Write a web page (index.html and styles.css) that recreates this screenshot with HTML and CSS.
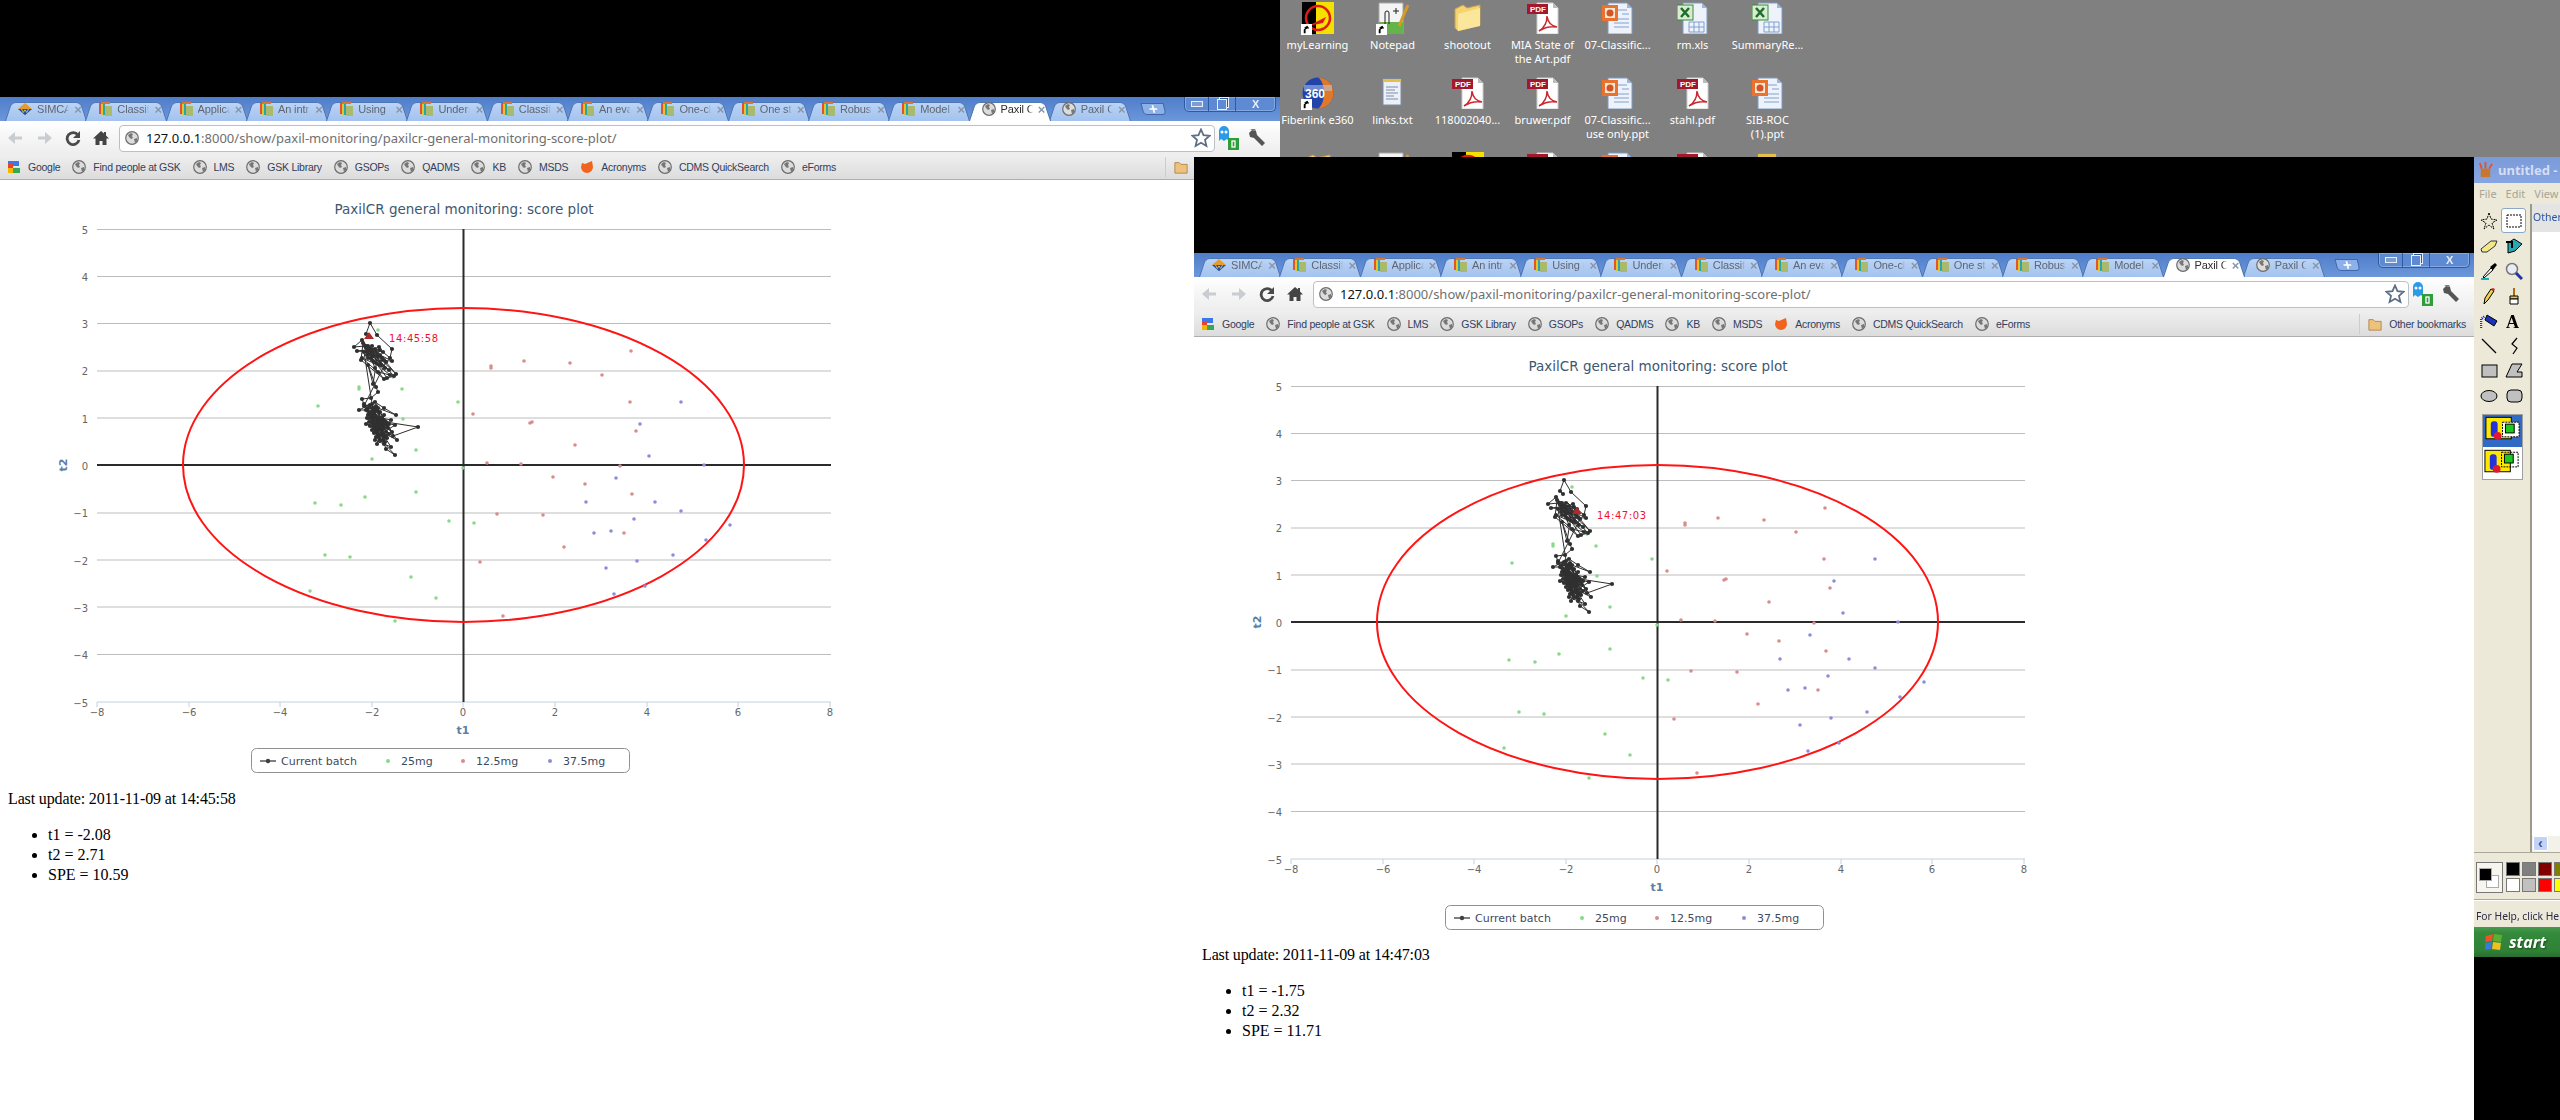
FILE: index.html
```html
<!DOCTYPE html>
<html lang="en">
<head>
<meta charset="utf-8">
<title>PaxilCR general monitoring</title>
<link rel="stylesheet" href="styles.css">
</head>
<body>
<svg class="defs" width="0" height="0" aria-hidden="true">
  <defs>
    <marker id="dot" markerUnits="userSpaceOnUse" markerWidth="6" markerHeight="6" refX="3" refY="3"><circle cx="3" cy="3" r="2.1" fill="#303030"/></marker>
    <symbol id="globe" viewBox="0 0 14 14"><circle cx="7" cy="7" r="6.3" fill="#dcdcdc" stroke="#6c6c6c" stroke-width="1.2"/><path d="M3 4l3-2 2 1-1 2 1 2-2 1-2-2zM9 8l3-1 0 3-2 2z" fill="#777"/></symbol>
    <symbol id="books" viewBox="0 0 14 14"><rect x="1" y="1" width="2" height="11" fill="#e0552b"/><rect x="3" y="1" width="2" height="12" fill="#e8c12e"/><rect x="5" y="1" width="2" height="12" fill="#2aa6a8"/><rect x="3" y="0" width="9" height="2" fill="#d9773a"/><rect x="7" y="4" width="7" height="10" fill="#a9b96e"/></symbol>
    <symbol id="simca" viewBox="0 0 16 14"><path d="M8 0l8 7H0z" fill="#e89a2a"/><path d="M0 7h16l-8 7z" fill="#1f4fa8"/><path d="M4 7l2 4 2-3 2 3 2-4" fill="none" stroke="#e8c94a"/></symbol>
    <symbol id="google" viewBox="0 0 14 14"><path d="M1 1h11v5H6v2H1z" fill="#3b78e7"/><path d="M1 4h5v4H1z" fill="#e8412f"/><path d="M1 8h5v5H1z" fill="#f2b600"/><path d="M6 8h7v5H6z" fill="#34a853"/></symbol>
    <symbol id="flame" viewBox="0 0 14 14"><path d="M2 3l3 1 7-3 1 6a6 6 0 1 1-12 0z" fill="#f0641e"/></symbol>
    <symbol id="ffolder" viewBox="0 0 16 16"><path d="M1 3h5l2 2h7v10H1z" fill="#eec27c" stroke="#a9834a"/></symbol>
    <symbol id="back" viewBox="0 0 16 16"><path d="M15 6.5H8V2L1 8l7 6V9.500h7z"/></symbol>
    <symbol id="reload" viewBox="0 0 16 16"><path d="M13 5a6 6 0 1 0 1 5" fill="none" stroke="#4a4a4a" stroke-width="2.800"/><path d="M15 1v7H8z" fill="#4a4a4a"/></symbol>
    <symbol id="home" viewBox="0 0 16 16"><path d="M8 1L0 8.500h2.500V15h4v-4h3v4h4V8.500H16l-3-3V2h-2v1.500z" fill="#444"/></symbol>
    <symbol id="star" viewBox="0 0 20 20"><path d="M10 1.500l2.500 5.700 6.200.6-4.700 4.100 1.400 6.100-5.400-3.200-5.400 3.200 1.400-6.100L1.300 7.800l6.200-.6z" fill="#fff" stroke="#5d6e86" stroke-width="1.800"/></symbol>
    <symbol id="ghost" viewBox="0 0 22 24"><path d="M2 15V5a5 5 0 0 1 10 0v10l-2-2-3 2-3-2z" fill="#2b9be8"/><circle cx="5" cy="6" r="1.500" fill="#fff"/><circle cx="9" cy="6" r="1.500" fill="#fff"/><rect x="11" y="12" width="11" height="12" fill="#2f9e3a"/><rect x="15" y="15" width="3" height="6" fill="none" stroke="#fff" stroke-width="1.300"/></symbol>
    <symbol id="wrench" viewBox="0 0 20 20"><path d="M2 5l3-3 4 1 1 4 8 8-3 3-8-8-4-1z" fill="#555"/><path d="M5 2L3 1l5 0 1 2z" fill="#777"/></symbol>
    <symbol id="pdf" viewBox="0 0 32 32"><path d="M10 1h16l5 5v26H10z" fill="#fff" stroke="#ccc"/><path d="M26 1v5h5z" fill="#bbb"/><rect x="0" y="2" width="21" height="10" fill="#a3182c"/><text x="3" y="10" class="pdft">PDF</text><path d="M12 29c5-3 8-9 8-15 1 7 4 10 10 11-6-1-12 0-18 4z" fill="none" stroke="#c8282e" stroke-width="1.500"/></symbol>
    <symbol id="ppt" viewBox="0 0 32 32"><path d="M6 1h19l5 5v26H6z" fill="#eef3fb" stroke="#7f9ac4"/><path d="M25 1v5h5z" fill="#9db6dc"/><path d="M12 17h15M12 21h15M12 25h15M16 8h9M20 12h7" stroke="#7f9fd0"/><rect x="0" y="3" width="16" height="16" fill="#e8722e"/><rect x="3" y="6" width="10" height="10" fill="#fbe6d0"/><circle cx="8" cy="11" r="3.500" fill="#d2552a"/></symbol>
    <symbol id="xls" viewBox="0 0 32 32"><path d="M6 1h19l5 5v26H6z" fill="#eef3fb" stroke="#7f9ac4"/><path d="M25 1v5h5z" fill="#9db6dc"/><path d="M12 20h15v10H12zM17 20v10M22 20v10M12 25h15" fill="none" stroke="#7f9fd0"/><rect x="0" y="3" width="16" height="15" fill="#d8ecd0" stroke="#3a8a3a"/><path d="M4 6l8 9M12 6l-8 9" stroke="#1d6e2c" stroke-width="2.500"/></symbol>
    <symbol id="dfolder" viewBox="0 0 32 32"><path d="M3 7l8-4 4 3 13-3v20l-22 6-3-3z" fill="#f6d36e" stroke="#c8a24a"/><path d="M6 12l22-6v18L6 29z" fill="#fbe79c"/></symbol>
    <symbol id="shortcut" viewBox="0 0 12 12"><rect width="12" height="12" fill="#fff"/><path d="M3 10V6l2-2H3l4-2 2 3H7L5 6v4z" fill="#000"/></symbol>
    <symbol id="mylearn" viewBox="0 0 32 32"><rect width="14" height="32" fill="#000"/><rect x="14" width="18" height="32" fill="#f5e000"/><circle cx="16" cy="16" r="12" fill="none" stroke="#e01818" stroke-width="2.500"/><path d="M6 24l18-9-3 6z" fill="#e01818"/></symbol>
    <symbol id="npp" viewBox="0 0 32 32"><path d="M2 1h24v31H2z" fill="#f4f4f4" stroke="#aaa"/><path d="M2 20h24v12H2z" fill="#66b34a"/><path d="M8 22V11a2 2 0 0 1 4 0v11" fill="none" stroke="#222"/><path d="M16 9h6M19 6v6" stroke="#222"/><path d="M22 24L31 3" stroke="#d79a26" stroke-width="3"/></symbol>
    <symbol id="e360" viewBox="0 0 32 32"><circle cx="16" cy="16" r="15.500" fill="#2244aa"/><path d="M16 .5a15.500 15.500 0 0 1 0 31c8-5 8-26 0-31z" fill="#e0782a"/><path d="M2 8h28v6H2z" fill="#bcd0f0" opacity=".5"/><text x="3" y="21" class="e36">360</text></symbol>
    <symbol id="txt" viewBox="0 0 32 32"><path d="M6 2h18v26H6z" fill="#eef0f8" stroke="#7b8cab"/><path d="M6 2h18v3H6z" fill="#e4c04a"/><path d="M9 10h12M9 13h9M9 16h12M9 19h8M9 22h12" stroke="#7b8cab"/></symbol>
    <symbol id="cluster" viewBox="0 180 1280 593">
      <polyline fill="none" stroke="#2e2e2e" stroke-width="1" marker-start="url(#dot)" marker-mid="url(#dot)" marker-end="url(#dot)" points="369,337 366,334 370,323 377,335 392,349 390,358 383,352 365,346 354,347 362,340 372,352 357,351 375,349 381,365 368,358 385,368 362,358 378,372 390,375 372,360 392,361 380,355 396,374 370,349 367,355 376,363 387,378 394,376 366,346 375,368 384,379 361,360 363,343 373,356 389,370 367,352 379,347 373,384 368,365 376,387 378,392 371,398 362,399 366,410 359,410 375,402 384,408 396,415 370,405 377,430 391,420 368,415 392,432 380,412 364,404 380,435 395,425 373,420 418,427 393,436 370,418 385,442 378,408 388,428 366,424 397,440 382,418 372,430 395,455 386,449 383,440 375,412 379,426 375,440 391,447 368,411 381,422 372,408 386,432 369,422 378,418 376,437 389,424 374,425 384,415 381,430 377,444 387,438 371,414 382,426 379,413 374,433 385,421 370,426 383,436 376,416 389,434 373,411 380,428 367,418 384,444 378,434 372,422 387,426 375,408 381,418 377,426 383,428 369,414 379,438 374,416 364,352 372,346 368,350 377,356 382,358 370,354 374,362 380,350 366,348 371,358 376,352 384,360 378,364 372,350 368,346 386,362 364,406 372,404 368,408 376,410 372,414 380,420 376,424 384,424 380,426 378,430 382,432 386,436 384,438 380,440 376,432 374,428 378,422 382,420 386,422 374,418 370,412 376,406"/>
    </symbol>
    <symbol id="scatter" viewBox="0 180 1280 593">
      <path class="dots-g" d="M378 330h0M359 387h0M359 389h0M402 389h0M318 406h0M458 402h0M403 419h0M416 450h0M372 459h0M463 468h0M416 492h0M365 497h0M393 377h0M315 503h0M341 505h0M449 521h0M474 523h0M325 555h0M350 557h0M411 577h0M436 598h0M310 591h0M395 621h0"/>
      <path class="dots-r" d="M491 366h0M491 368h0M524 361h0M473 414h0M532 422h0M530 423h0M487 463h0M521 464h0M553 477h0M570 363h0M631 351h0M602 375h0M630 402h0M636 431h0M575 445h0M620 466h0M585 484h0M632 494h0M543 515h0M624 533h0M564 547h0M503 616h0M497 514h0M480 562h0"/>
      <path class="dots-b" d="M681 402h0M640 424h0M649 456h0M704 465h0M616 478h0M586 502h0M655 502h0M681 511h0M634 519h0M730 525h0M594 533h0M611 531h0M706 540h0M673 555h0M637 561h0M606 568h0M645 586h0M614 594h0"/>
    </symbol>
    <symbol id="frame" viewBox="0 180 1280 593">
      <path class="grid" d="M97 229.500H831M97 276.500H831M97 323.500H831M97 371H831M97 418H831M97 513H831M97 560H831M97 607H831M97 654.500H831"/>
      <path class="xaxis" d="M97 702H831M97 702v5M189 702v5M280 702v5M372 702v5M463 702v5M555 702v5M647 702v5M738 702v5M830 702v5"/>
      <path class="zero" d="M97 465H831M463.500 229V702"/>
      <ellipse class="ring" cx="463.500" cy="465" rx="280.500" ry="157"/>
    </symbol>
  </defs>
</svg>

<div class="desktop">
  <div class="dicon"><svg class="dsvg"><use href="#mylearn"/></svg><svg class="sc"><use href="#shortcut"/></svg><span>myLearning</span></div>
  <div class="dicon"><svg class="dsvg"><use href="#npp"/></svg><svg class="sc"><use href="#shortcut"/></svg><span>Notepad</span></div>
  <div class="dicon"><svg class="dsvg"><use href="#dfolder"/></svg><span>shootout</span></div>
  <div class="dicon"><svg class="dsvg"><use href="#pdf"/></svg><span>MIA State of the Art.pdf</span></div>
  <div class="dicon"><svg class="dsvg"><use href="#ppt"/></svg><span>07-Classific...</span></div>
  <div class="dicon"><svg class="dsvg"><use href="#xls"/></svg><span>rm.xls</span></div>
  <div class="dicon"><svg class="dsvg"><use href="#xls"/></svg><span>SummaryRe...</span></div>
  <div class="dicon"><svg class="dsvg"><use href="#e360"/></svg><svg class="sc"><use href="#shortcut"/></svg><span>Fiberlink e360</span></div>
  <div class="dicon"><svg class="dsvg"><use href="#txt"/></svg><span>links.txt</span></div>
  <div class="dicon"><svg class="dsvg"><use href="#pdf"/></svg><span>118002040...</span></div>
  <div class="dicon"><svg class="dsvg"><use href="#pdf"/></svg><span>bruwer.pdf</span></div>
  <div class="dicon"><svg class="dsvg"><use href="#ppt"/></svg><span>07-Classific... use only.ppt</span></div>
  <div class="dicon"><svg class="dsvg"><use href="#pdf"/></svg><span>stahl.pdf</span></div>
  <div class="dicon"><svg class="dsvg"><use href="#ppt"/></svg><span>SIB-ROC (1).ppt</span></div>
  <div class="dicon"><svg class="dsvg"><use href="#dfolder"/></svg></div>
  <div class="dicon"><svg class="dsvg"><use href="#npp"/></svg></div>
  <div class="dicon"><svg class="dsvg"><use href="#mylearn"/></svg></div>
  <div class="dicon"><svg class="dsvg"><use href="#pdf"/></svg></div>
  <div class="dicon"><svg class="dsvg"><use href="#ppt"/></svg></div>
  <div class="dicon"><svg class="dsvg"><use href="#pdf"/></svg></div>
  <div class="dicon"><svg class="dsvg"><use href="#txt"/></svg></div>
</div>

<section class="win win-one">
  <div class="tabstrip">
    <div class="tab"><svg class="ic"><use href="#simca"/></svg><span class="tt">SIMCA</span><span class="tx">×</span></div>
    <div class="tab"><svg class="ic"><use href="#books"/></svg><span class="tt">Classifi</span><span class="tx">×</span></div>
    <div class="tab"><svg class="ic"><use href="#books"/></svg><span class="tt">Applica</span><span class="tx">×</span></div>
    <div class="tab"><svg class="ic"><use href="#books"/></svg><span class="tt">An intr</span><span class="tx">×</span></div>
    <div class="tab"><svg class="ic"><use href="#books"/></svg><span class="tt">Using u</span><span class="tx">×</span></div>
    <div class="tab"><svg class="ic"><use href="#books"/></svg><span class="tt">Unders</span><span class="tx">×</span></div>
    <div class="tab"><svg class="ic"><use href="#books"/></svg><span class="tt">Classifi</span><span class="tx">×</span></div>
    <div class="tab"><svg class="ic"><use href="#books"/></svg><span class="tt">An eva</span><span class="tx">×</span></div>
    <div class="tab"><svg class="ic"><use href="#books"/></svg><span class="tt">One-cl</span><span class="tx">×</span></div>
    <div class="tab"><svg class="ic"><use href="#books"/></svg><span class="tt">One st</span><span class="tx">×</span></div>
    <div class="tab"><svg class="ic"><use href="#books"/></svg><span class="tt">Robust</span><span class="tx">×</span></div>
    <div class="tab"><svg class="ic"><use href="#books"/></svg><span class="tt">Model</span><span class="tx">×</span></div>
    <div class="tab active"><svg class="ic"><use href="#globe"/></svg><span class="tt">Paxil C</span><span class="tx">×</span></div>
    <div class="tab"><svg class="ic"><use href="#globe"/></svg><span class="tt">Paxil C</span><span class="tx">×</span></div>
    <div class="newtab">+</div>
    <div class="wctl"><span class="wmin"></span><span class="wmax"></span><span class="wx">X</span></div>
  </div>
  <div class="toolbar">
    <svg class="nav dim"><use href="#back"/></svg>
    <svg class="nav dim flip"><use href="#back"/></svg>
    <svg class="nav"><use href="#reload"/></svg>
    <svg class="nav"><use href="#home"/></svg>
    <div class="omni"><svg class="ic"><use href="#globe"/></svg><span class="url"><b>127.0.0.1</b>:8000/show/paxil-monitoring/paxilcr-general-monitoring-score-plot/</span><svg class="star"><use href="#star"/></svg></div>
    <svg class="ghost"><use href="#ghost"/></svg>
    <svg class="wrench"><use href="#wrench"/></svg>
  </div>
  <div class="bookmarks">
    <span class="bm"><svg class="ic"><use href="#google"/></svg>Google</span>
    <span class="bm"><svg class="ic"><use href="#globe"/></svg>Find people at GSK</span>
    <span class="bm"><svg class="ic"><use href="#globe"/></svg>LMS</span>
    <span class="bm"><svg class="ic"><use href="#globe"/></svg>GSK Library</span>
    <span class="bm"><svg class="ic"><use href="#globe"/></svg>GSOPs</span>
    <span class="bm"><svg class="ic"><use href="#globe"/></svg>QADMS</span>
    <span class="bm"><svg class="ic"><use href="#globe"/></svg>KB</span>
    <span class="bm"><svg class="ic"><use href="#globe"/></svg>MSDS</span>
    <span class="bm"><svg class="ic"><use href="#flame"/></svg>Acronyms</span>
    <span class="bm"><svg class="ic"><use href="#globe"/></svg>CDMS QuickSearch</span>
    <span class="bm"><svg class="ic"><use href="#globe"/></svg>eForms</span>
    <span class="bm other"><svg class="ic"><use href="#ffolder"/></svg>Other bookmarks</span>
  </div>
  <main class="page">
    <svg class="chart" viewBox="0 180 1280 593" width="1280" height="593">
      <text class="ctitle" x="464" y="214" text-anchor="middle">PaxilCR general monitoring: score plot</text>
      <use href="#frame" x="0" y="180" width="1280" height="593"/>
      <use href="#scatter" x="0" y="180" width="1280" height="593"/>
      <use href="#cluster" x="0" y="180" width="1280" height="593"/>
      <path class="tri" d="M369 332l5 7h-10z"/>
      <text class="stamp" x="389" y="342">14:45:58</text>
      <g class="ylab"><text x="88" y="234">5</text><text x="88" y="281">4</text><text x="88" y="328">3</text><text x="88" y="375">2</text><text x="88" y="423">1</text><text x="88" y="470">0</text><text x="88" y="517">−1</text><text x="88" y="565">−2</text><text x="88" y="612">−3</text><text x="88" y="659">−4</text><text x="88" y="707">−5</text></g>
      <g class="xlab"><text x="97" y="716">−8</text><text x="189" y="716">−6</text><text x="280" y="716">−4</text><text x="372" y="716">−2</text><text x="463" y="716">0</text><text x="555" y="716">2</text><text x="647" y="716">4</text><text x="738" y="716">6</text><text x="830" y="716">8</text></g>
      <text class="atitle" x="463" y="734" text-anchor="middle">t1</text>
      <text class="atitle" x="0" y="0" text-anchor="middle" transform="translate(67 465) rotate(-90)">t2</text>
      <rect class="lgbox" x="251.500" y="748.500" width="378" height="24" rx="5"/>
      <path class="lgline" d="M260 761h16"/><circle class="lgdot-k" cx="268" cy="761" r="2.200"/>
      <text class="lg" x="281" y="765">Current batch</text>
      <circle class="lgdot-g" cx="388" cy="761" r="2"/><text class="lg" x="401" y="765">25mg</text>
      <circle class="lgdot-r" cx="463" cy="761" r="2"/><text class="lg" x="476" y="765">12.5mg</text>
      <circle class="lgdot-b" cx="550" cy="761" r="2"/><text class="lg" x="563" y="765">37.5mg</text>
    </svg>
    <p class="upd">Last update: 2011-11-09 at 14:45:58</p>
    <ul class="vals"><li>t1 = -2.08</li><li>t2 = 2.71</li><li>SPE = 10.59</li></ul>
  </main>
</section>

<section class="win win-two">
  <div class="tabstrip">
    <div class="tab"><svg class="ic"><use href="#simca"/></svg><span class="tt">SIMCA</span><span class="tx">×</span></div>
    <div class="tab"><svg class="ic"><use href="#books"/></svg><span class="tt">Classifi</span><span class="tx">×</span></div>
    <div class="tab"><svg class="ic"><use href="#books"/></svg><span class="tt">Applica</span><span class="tx">×</span></div>
    <div class="tab"><svg class="ic"><use href="#books"/></svg><span class="tt">An intr</span><span class="tx">×</span></div>
    <div class="tab"><svg class="ic"><use href="#books"/></svg><span class="tt">Using u</span><span class="tx">×</span></div>
    <div class="tab"><svg class="ic"><use href="#books"/></svg><span class="tt">Unders</span><span class="tx">×</span></div>
    <div class="tab"><svg class="ic"><use href="#books"/></svg><span class="tt">Classifi</span><span class="tx">×</span></div>
    <div class="tab"><svg class="ic"><use href="#books"/></svg><span class="tt">An eva</span><span class="tx">×</span></div>
    <div class="tab"><svg class="ic"><use href="#books"/></svg><span class="tt">One-cl</span><span class="tx">×</span></div>
    <div class="tab"><svg class="ic"><use href="#books"/></svg><span class="tt">One st</span><span class="tx">×</span></div>
    <div class="tab"><svg class="ic"><use href="#books"/></svg><span class="tt">Robust</span><span class="tx">×</span></div>
    <div class="tab"><svg class="ic"><use href="#books"/></svg><span class="tt">Model</span><span class="tx">×</span></div>
    <div class="tab active"><svg class="ic"><use href="#globe"/></svg><span class="tt">Paxil C</span><span class="tx">×</span></div>
    <div class="tab"><svg class="ic"><use href="#globe"/></svg><span class="tt">Paxil C</span><span class="tx">×</span></div>
    <div class="newtab">+</div>
    <div class="wctl"><span class="wmin"></span><span class="wmax"></span><span class="wx">X</span></div>
  </div>
  <div class="toolbar">
    <svg class="nav dim"><use href="#back"/></svg>
    <svg class="nav dim flip"><use href="#back"/></svg>
    <svg class="nav"><use href="#reload"/></svg>
    <svg class="nav"><use href="#home"/></svg>
    <div class="omni"><svg class="ic"><use href="#globe"/></svg><span class="url"><b>127.0.0.1</b>:8000/show/paxil-monitoring/paxilcr-general-monitoring-score-plot/</span><svg class="star"><use href="#star"/></svg></div>
    <svg class="ghost"><use href="#ghost"/></svg>
    <svg class="wrench"><use href="#wrench"/></svg>
  </div>
  <div class="bookmarks">
    <span class="bm"><svg class="ic"><use href="#google"/></svg>Google</span>
    <span class="bm"><svg class="ic"><use href="#globe"/></svg>Find people at GSK</span>
    <span class="bm"><svg class="ic"><use href="#globe"/></svg>LMS</span>
    <span class="bm"><svg class="ic"><use href="#globe"/></svg>GSK Library</span>
    <span class="bm"><svg class="ic"><use href="#globe"/></svg>GSOPs</span>
    <span class="bm"><svg class="ic"><use href="#globe"/></svg>QADMS</span>
    <span class="bm"><svg class="ic"><use href="#globe"/></svg>KB</span>
    <span class="bm"><svg class="ic"><use href="#globe"/></svg>MSDS</span>
    <span class="bm"><svg class="ic"><use href="#flame"/></svg>Acronyms</span>
    <span class="bm"><svg class="ic"><use href="#globe"/></svg>CDMS QuickSearch</span>
    <span class="bm"><svg class="ic"><use href="#globe"/></svg>eForms</span>
    <span class="bm other"><svg class="ic"><use href="#ffolder"/></svg>Other bookmarks</span>
  </div>
  <main class="page">
    <svg class="chart" viewBox="0 180 1280 593" width="1280" height="593">
      <text class="ctitle" x="464" y="214" text-anchor="middle">PaxilCR general monitoring: score plot</text>
      <use href="#frame" x="0" y="180" width="1280" height="593"/>
      <use href="#scatter" x="0" y="180" width="1280" height="593"/>
      <use href="#cluster" x="0" y="180" width="1280" height="593"/>
      <path class="ktrail" d="M373 345l10 10"/>
      <path class="tri" d="M383 350l5 7h-10z"/>
      <text class="stamp" x="403" y="362">14:47:03</text>
      <g class="ylab"><text x="88" y="234">5</text><text x="88" y="281">4</text><text x="88" y="328">3</text><text x="88" y="375">2</text><text x="88" y="423">1</text><text x="88" y="470">0</text><text x="88" y="517">−1</text><text x="88" y="565">−2</text><text x="88" y="612">−3</text><text x="88" y="659">−4</text><text x="88" y="707">−5</text></g>
      <g class="xlab"><text x="97" y="716">−8</text><text x="189" y="716">−6</text><text x="280" y="716">−4</text><text x="372" y="716">−2</text><text x="463" y="716">0</text><text x="555" y="716">2</text><text x="647" y="716">4</text><text x="738" y="716">6</text><text x="830" y="716">8</text></g>
      <text class="atitle" x="463" y="734" text-anchor="middle">t1</text>
      <text class="atitle" x="0" y="0" text-anchor="middle" transform="translate(67 465) rotate(-90)">t2</text>
      <rect class="lgbox" x="251.500" y="748.500" width="378" height="24" rx="5"/>
      <path class="lgline" d="M260 761h16"/><circle class="lgdot-k" cx="268" cy="761" r="2.200"/>
      <text class="lg" x="281" y="765">Current batch</text>
      <circle class="lgdot-g" cx="388" cy="761" r="2"/><text class="lg" x="401" y="765">25mg</text>
      <circle class="lgdot-r" cx="463" cy="761" r="2"/><text class="lg" x="476" y="765">12.5mg</text>
      <circle class="lgdot-b" cx="550" cy="761" r="2"/><text class="lg" x="563" y="765">37.5mg</text>
    </svg>
    <p class="upd">Last update: 2011-11-09 at 14:47:03</p>
    <ul class="vals"><li>t1 = -1.75</li><li>t2 = 2.32</li><li>SPE = 11.71</li></ul>
  </main>
</section>

<section class="paint">
  <div class="ptitle"><svg class="pico" viewBox="0 0 18 18"><path d="M4 16V7h10v9z" fill="#c9772e"/><path d="M5 7L3 1M9 7V0M13 7l3-5" stroke="#e0542a" stroke-width="2"/></svg><span>untitled - Paint</span></div>
  <div class="pmenu"><span>File</span><span>Edit</span><span>View</span></div>
  <div class="pbody">
    <div class="ptools">
      <div class="toolgrid">
        <span class="tool"><svg viewBox="0 0 18 18"><path d="M9 1l2 6 6 1-5 3 2 6-5-4-5 4 2-6-5-3 6-1z" fill="none" stroke="#000" stroke-dasharray="2 1"/></svg></span>
        <span class="tool sel"><svg viewBox="0 0 18 18"><rect x="2" y="3" width="14" height="12" fill="none" stroke="#000" stroke-dasharray="2 1"/></svg></span>
        <span class="tool"><svg viewBox="0 0 18 18"><path d="M1 12l10-8h6l-2 5-8 6H2z" fill="#f0e88a" stroke="#333"/></svg></span>
        <span class="tool"><svg viewBox="0 0 18 18"><path d="M3 16V6l6-4 8 5-7 7z" fill="#2aa8b4" stroke="#000"/><path d="M1 5h6v6" stroke="#000" stroke-width="2" fill="none"/></svg></span>
        <span class="tool"><svg viewBox="0 0 18 18"><path d="M3 15l8-9 2 2-9 8z" fill="#fff" stroke="#000"/><path d="M10 5l5-4 2 2-4 5z"/><path d="M1 17h8" stroke="#1ab0b0" stroke-width="2"/></svg></span>
        <span class="tool"><svg viewBox="0 0 18 18"><circle cx="7" cy="7" r="5.500" fill="#e8ecf4" stroke="#777" stroke-width="1.500"/><path d="M11 11l6 6" stroke="#2233aa" stroke-width="3"/></svg></span>
        <span class="tool"><svg viewBox="0 0 18 18"><path d="M4 17l1-6 6-9 3 2-6 9z" fill="#f0d24a" stroke="#000"/><path d="M11 2l3 2 1-2-2-1z" fill="#d22"/></svg></span>
        <span class="tool"><svg viewBox="0 0 18 18"><path d="M8 1h2v8H8z" fill="#b06a20"/><path d="M5 9h8v3H5z" fill="#e8c84a" stroke="#000"/><path d="M5 12h8v5H5z" fill="#fff" stroke="#000"/></svg></span>
        <span class="tool"><svg viewBox="0 0 18 18"><path d="M1 16V7l4-3" stroke="#2233cc" stroke-width="2.500" stroke-dasharray="1 1" fill="none"/><path d="M7 3l10 6-3 5-9-6z" fill="#1a33bb" stroke="#000"/></svg></span>
        <span class="tool"><svg viewBox="0 0 18 18"><text x="1" y="16" class="ptxt">A</text></svg></span>
        <span class="tool"><svg viewBox="0 0 18 18"><path d="M2 2l14 14" stroke="#000" stroke-width="1.200"/></svg></span>
        <span class="tool"><svg viewBox="0 0 18 18"><path d="M12 1L7 7l5 4-4 6" fill="none" stroke="#000" stroke-width="1.200"/></svg></span>
        <span class="tool"><svg viewBox="0 0 18 18"><rect x="2" y="3" width="15" height="12" fill="#c0c0c0" stroke="#000"/></svg></span>
        <span class="tool"><svg viewBox="0 0 18 18"><path d="M7 2h10l-5 8h5v5H1z" fill="#c0c0c0" stroke="#000"/></svg></span>
        <span class="tool"><svg viewBox="0 0 18 18"><ellipse cx="9" cy="9" rx="8" ry="5.500" fill="#c0c0c0" stroke="#000"/></svg></span>
        <span class="tool"><svg viewBox="0 0 18 18"><rect x="2" y="3" width="15" height="12" rx="4" fill="#c0c0c0" stroke="#000"/></svg></span>
      </div>
      <div class="optbox">
        <div class="opt on"><svg viewBox="0 0 40 30"><rect x="3" y="2" width="26" height="22" fill="#ffe800" stroke="#000"/><rect x="8" y="6" width="7" height="16" rx="3" fill="#2233dd"/><circle cx="15" cy="21" r="4" fill="#e01838"/><rect x="20" y="7" width="17" height="15" fill="#fff" stroke="#000" stroke-dasharray="2 1"/><rect x="23" y="9" width="9" height="9" fill="#1ec81e" stroke="#000"/></svg></div>
        <div class="opt"><svg viewBox="0 0 40 30"><rect x="2" y="3" width="26" height="22" fill="#ffe800" stroke="#000"/><rect x="7" y="7" width="7" height="16" rx="3" fill="#2233dd"/><circle cx="14" cy="22" r="4" fill="#e01838"/><rect x="19" y="5" width="17" height="15" fill="none" stroke="#000" stroke-dasharray="2 1"/><rect x="22" y="7" width="9" height="9" fill="#1ec81e" stroke="#000"/></svg></div>
      </div>
    </div>
    <div class="pcanvas">
      <div class="ptab">Other</div>
      <div class="pwhite"></div>
      <div class="pscroll"><span class="sbtn">‹</span></div>
    </div>
  </div>
  <div class="ppal">
    <div class="cur"><span class="cur-bg"></span><span class="cur-fg"></span></div>
    <div class="swatches">
      <span class="sw s-black"></span><span class="sw s-gray"></span><span class="sw s-maroon"></span><span class="sw s-olive"></span>
      <span class="sw s-white"></span><span class="sw s-silver"></span><span class="sw s-red"></span><span class="sw s-yellow"></span>
    </div>
  </div>
  <div class="pstatus">For Help, click Help Topics</div>
  <div class="startbar"><svg class="flag" viewBox="0 0 18 18"><path d="M1 3l7-2-1 7-7 1z" fill="#e8562a"/><path d="M9 1l8 1-1 7-8-1z" fill="#5cb030"/><path d="M0 10l7-1-1 7-7 1z" fill="#3a7ad8"/><path d="M8 9l8 1-1 7-8-1z" fill="#f0c020"/></svg><span>start</span></div>
</section>
</body>
</html>
```

FILE: styles.css
```css
* { box-sizing: border-box; }
html, body { margin: 0; width: 2560px; height: 1120px; background: #000; overflow: hidden; }
.defs { position: absolute; }
.pdft { font: bold 8px "Liberation Sans", sans-serif; fill: #fff; }
.e36 { font: bold 12px "Liberation Sans", sans-serif; fill: #fff; }

/* desktop */
.desktop { position: absolute; left: 1280px; top: 0; width: 1280px; height: 157px; background: #808080; overflow: hidden;
  display: grid; grid-template-columns: repeat(7, 75px); grid-auto-rows: 75px; align-content: start; }
.dicon { position: relative; display: flex; flex-direction: column; align-items: center; padding-top: 2px; color: #fff;
  font: 11px/14px "Noto Sans", sans-serif; text-align: center; }
.dicon span { margin-top: 4px; width: 73px; }
.dsvg { width: 32px; height: 32px; flex: none; }
.sc { position: absolute; left: 21px; top: 24px; width: 11px; height: 11px; }

/* chrome windows */
.win { position: absolute; width: 1280px; display: flex; flex-direction: column; overflow: hidden; background: #000; }
.win-one { left: 0; top: 97px; height: 1023px; }
.win-two { left: 1194px; top: 157px; height: 963px; padding-top: 96px; }
.win-two .bookmarks { height: 26px; }
.win-two .upd { margin-top: 15px; }
.tabstrip { height: 24px; flex: none; display: flex; padding-left: 6px; background: linear-gradient(#4f7dc9, #6c97da); position: relative; align-items: stretch; }
.tab { position: relative; flex: 0 0 80.3px; display: flex; align-items: center; padding-left: 12px; font: 11px "Liberation Sans", sans-serif; letter-spacing: -.1px; color: #5f6673; z-index: 0; }
.tab::before { content: ""; position: absolute; inset: 1px -1px 0; z-index: -1; background: linear-gradient(#bcd4f5, #a3c3ef);
  border: 1px solid #4a72b0; border-bottom: 0; border-radius: 6px 6px 0 0; transform: perspective(30px) rotateX(14deg); transform-origin: bottom; }
.tab.active { color: #2c2c2c; z-index: 1; }
.tab.active::before { background: #fff; }
.ic { width: 14px; height: 14px; flex: none; }
.tt { margin-left: 5px; width: 32px; overflow: hidden; white-space: nowrap; -webkit-mask-image: linear-gradient(90deg, #000 85%, transparent); mask-image: linear-gradient(90deg, #000 85%, transparent); }
.tx { margin-left: 5px; width: 8px; text-align: center; font: bold 13px/1 "Liberation Sans", sans-serif; color: #8896ab; }
.newtab { margin: 6px 0 0 12px; width: 23px; height: 12px; border: 1px solid #3f68aa; border-radius: 0 0 4px 4px; background: #8db0e8; color: #fff; font: bold 15px/10px "Liberation Sans", sans-serif; text-align: center; transform: skewX(14deg); }
.wctl { margin-left: 19px; height: 15px; width: 92px; flex: none; display: flex; border: 1px solid #2e5aa2; border-top: 0; border-radius: 0 0 5px 5px; background: #5d8ad2; box-shadow: inset 0 0 0 1px #86a8e2; }
.wctl span { height: 100%; display: flex; align-items: center; justify-content: center; color: #e8eefa; font: bold 11px "Liberation Sans", sans-serif; border-right: 1px solid #2e5aa2; position: relative; }
.wmin { width: 24px; }
.wmin::after { content: ""; width: 10px; height: 4px; border: 1px solid #e8eefa; background: #7f9dd0; }
.wmax { width: 27px; }
.wmax::after { content: ""; width: 8px; height: 9px; border: 1.500px solid #e8eefa; box-shadow: 2px -2px 0 -1px #2e5aa2, 2px -2px 0 0 #e8eefa; }
.wx { flex: 1; border-right: 0 !important; }
.toolbar { height: 34px; flex: none; display: flex; align-items: center; padding-left: 7px; background: linear-gradient(#fff, #f4f4f4 60%, #ededed); }
.nav { width: 16px; height: 16px; margin-right: 12px; flex: none; fill: #444; }
.nav.dim { fill: #c9ccd0; margin-right: 14px; }
.nav.flip { transform: scaleX(-1); margin-right: 12px; }
.nav:nth-of-type(4) { margin-right: 10px; }
.omni { width: 1096px; height: 27px; flex: none; display: flex; align-items: center; padding-left: 5px; background: #fff; border: 1px solid #bcc0c6; border-radius: 4px; font: 13px "Noto Sans", sans-serif; color: #6f6f6f; }
.url { margin-left: 7px; flex: 1; white-space: nowrap; }
.url b { font-weight: 400; color: #111; }
.star { width: 20px; height: 20px; margin-right: 3px; flex: none; }
.ghost { width: 22px; height: 24px; margin-left: 2px; flex: none; }
.wrench { width: 20px; height: 20px; margin-left: 8px; flex: none; }
.bookmarks { height: 25px; flex: none; display: flex; align-items: center; padding-left: 7px; gap: 12px; background: linear-gradient(#efefef, #dcdcdc); border-bottom: 1px solid #aeaeae; font: 10.500px "Liberation Sans", sans-serif; letter-spacing: -.25px; color: #30405c; }
.bm { display: flex; align-items: center; gap: 7px; white-space: nowrap; flex: none; }
.bm.other { margin-left: auto; margin-right: 8px; padding-left: 8px; border-left: 1px solid #ccc; height: 20px; }
.page { flex: 1; font: 16px/20px "Liberation Serif", serif; color: #000; padding-left: 8px; background: #fff; }
.chart { display: block; margin-left: -8px; }
.ctitle { font: 13.500px "DejaVu Sans", sans-serif; fill: #3e576f; }
.grid { stroke: #bdbdbd; stroke-width: 1; fill: none; }
.xaxis { stroke: #c0d0e0; stroke-width: 1; fill: none; }
.zero { stroke: #2a2a2a; stroke-width: 2; fill: none; }
.ring { fill: none; stroke: #ff1414; stroke-width: 2; }
.dots-g, .dots-r, .dots-b { fill: none; stroke-width: 3.600; stroke-linecap: round; }
.dots-g { stroke: #8ad88a; }
.dots-r { stroke: #d88c8c; }
.dots-b { stroke: #8c8cdc; }
.tri { fill: #b02828; }
.ktrail { stroke: #2e2e2e; fill: none; }
.stamp { font: 10px "DejaVu Sans", sans-serif; fill: #f01030; letter-spacing: .6px; }
.ylab text { font: 10px "DejaVu Sans", sans-serif; fill: #666; text-anchor: end; }
.xlab text { font: 10px "DejaVu Sans", sans-serif; fill: #666; text-anchor: middle; }
.atitle { font: bold 11px "DejaVu Sans", sans-serif; fill: #5d7fa6; }
.lgbox { fill: #fff; stroke: #909090; }
.lgline { stroke: #808080; stroke-width: 2; }
.lgdot-k { fill: #404040; }
.lgdot-g { fill: #8ad88a; }
.lgdot-r { fill: #d88c8c; }
.lgdot-b { fill: #8c8cdc; }
.lg { font: 11px "DejaVu Sans", sans-serif; fill: #3e4a5e; }
.upd { margin: 16px 0; letter-spacing: -.14px; }
.vals { margin: 16px 0; padding-left: 40px; }

/* paint */
.paint { position: absolute; left: 2474px; top: 157px; width: 86px; height: 800px; display: flex; flex-direction: column; overflow: hidden; background: #ece9d8; font-family: "Noto Sans", sans-serif; }
.ptitle { height: 26px; flex: none; display: flex; align-items: center; gap: 4px; padding-left: 3px; background: linear-gradient(#7b9ad8, #86a5e2); color: #d4def5; font: bold 13px "Noto Sans", sans-serif; white-space: nowrap; }
.pico { width: 17px; height: 17px; flex: none; }
.pmenu { height: 21px; flex: none; display: flex; gap: 9px; padding-left: 5px; align-items: center; color: #a8a594; font-size: 11px; white-space: nowrap; }
.pbody { flex: 1; display: flex; min-height: 0; border-bottom: 1px solid #aca899; }
.ptools { width: 58px; flex: none; border-right: 2px solid #9d9a8a; padding: 4px 0 0 2px; display: flex; flex-direction: column; }
.toolgrid { display: grid; grid-template-columns: 25px 25px; grid-auto-rows: 25px; }
.tool { display: flex; align-items: center; justify-content: center; }
.tool svg { width: 18px; height: 18px; }
.tool.sel { background: #fff; border: 1px solid #8aa8c8; border-radius: 3px; }
.ptxt { font: bold 18px "Liberation Serif", serif; fill: #000; }
.optbox { margin: 6px 0 0 6px; width: 41px; height: 66px; border: 1px solid #a0a0a0; background: #fff; display: flex; flex-direction: column; }
.opt { height: 32px; }
.opt svg { width: 39px; height: 30px; display: block; }
.opt.on { background: #316ac5; }
.pcanvas { flex: 1; min-width: 0; display: flex; flex-direction: column; }
.ptab { height: 28px; flex: none; background: #e4e4e4; color: #2a55a4; font-size: 10.500px; line-height: 26px; padding-left: 1px; }
.pwhite { flex: 1; background: #fff; }
.pscroll { height: 16px; flex: none; background: #f2f1ea; padding-left: 1px; }
.sbtn { display: block; width: 15px; height: 15px; background: #c3d3f5; border: 1px solid #fff; border-radius: 2px; color: #3a5a9a; font: bold 15px/12px "Liberation Sans", sans-serif; text-align: center; }
.ppal { height: 47px; flex: none; display: flex; gap: 3px; padding: 9px 0 0 2px; border-bottom: 1px solid #aca899; }
.cur { position: relative; width: 27px; height: 31px; flex: none; background: #f6f5ee; border: 1px solid #777; }
.cur-bg, .cur-fg { position: absolute; width: 13px; height: 13px; border: 1px solid #aaa; }
.cur-fg { left: 2px; top: 5px; background: #000; }
.cur-bg { left: 9px; top: 12px; background: #fff; }
.swatches { display: grid; grid-template-columns: repeat(4, 14px); grid-auto-rows: 14px; gap: 2px; }
.sw { display: block; border: 1px solid #777; }
.s-black { background: #000; } .s-gray { background: #808080; } .s-maroon { background: #800000; } .s-olive { background: #808000; }
.s-white { background: #fff; } .s-silver { background: #c0c0c0; } .s-red { background: #f00; } .s-yellow { background: #ff0; }
.pstatus { height: 27px; flex: none; padding-left: 2px; color: #2a2a4a; font-size: 10.300px; line-height: 30px; white-space: nowrap; background: #ece9d8; border-top: 1px solid #fff; }
.startbar { height: 30px; flex: none; display: flex; align-items: center; gap: 6px; padding-left: 11px; background: linear-gradient(#4a9a50, #348a3c 20%, #2f8136 80%, #2a6d30); color: #fff; font: italic bold 16px "Noto Sans", sans-serif; text-shadow: 1px 1px 2px #1a4a1a; }
.flag { width: 18px; height: 18px; flex: none; }
```
